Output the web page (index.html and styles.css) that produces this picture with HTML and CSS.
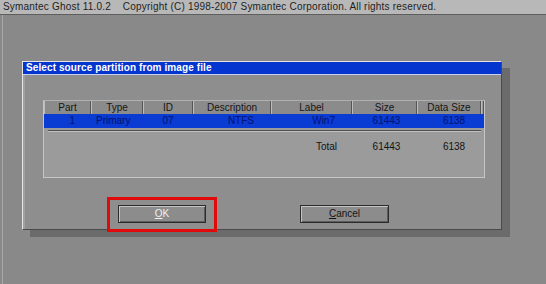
FILE: index.html
```html
<!DOCTYPE html>
<html>
<head>
<meta charset="utf-8">
<link rel="stylesheet" href="styles.css">
</head>
<body>
<div class="topbar">Symantec Ghost 11.0.2&nbsp;&nbsp;&nbsp; Copyright (C) 1998-2007 Symantec Corporation. All rights reserved.</div>
<div class="desk">
  <div class="dialog">
    <div class="title">Select source partition from image file</div>
    <div class="body">
      <div class="table">
        <div class="row head">
          <div class="c">Part</div>
          <div class="c">Type</div>
          <div class="c">ID</div>
          <div class="c">Description</div>
          <div class="c">Label</div>
          <div class="c">Size</div>
          <div class="c">Data Size</div>
          <div class="c stub"></div>
        </div>
        <div class="row sel">
          <div class="c r p1">1</div>
          <div class="c l">Primary</div>
          <div class="c">07</div>
          <div class="c r p2">NTFS</div>
          <div class="c r p2">Win7</div>
          <div class="c">61443</div>
          <div class="c">6138</div>
          <div class="c stub"></div>
        </div>
        <div class="sep"></div>
        <div class="row total">
          <div class="c"></div>
          <div class="c"></div>
          <div class="c"></div>
          <div class="c"></div>
          <div class="c tr">Total</div>
          <div class="c">61443</div>
          <div class="c">6138</div>
          <div class="c stub"></div>
        </div>
      </div>
      <div class="buttons">
        <div class="btn ok"><span class="u">O</span>K<div class="mark"></div></div>
        <div class="btn cancel"><span class="u">C</span>ancel</div>
      </div>
    </div>
  </div>
</div>
</body>
</html>
```
FILE: styles.css
```css
html, body {
  margin: 0;
  padding: 0;
}
body {
  width: 546px;
  height: 284px;
  overflow: hidden;
  background: #898989;
  font-family: "Liberation Sans", Arial, sans-serif;
  font-size: 10px;
  color: #151515;
}
.topbar {
  height: 14px;
  line-height: 14px;
  background: #b8b8b8;
  border-bottom: 1px solid #5e5e5e;
  padding-left: 3px;
  color: #1e1e1e;
  font-size: 10px;
  white-space: nowrap;
  letter-spacing: 0.2px;
}
.desk {
  height: 269px;
  margin-left: 2px;
  border-left: 1px solid #a9a9a9;
  padding-top: 46px;
  padding-left: 19px;
  box-sizing: border-box;
}
.dialog {
  width: 480px;
  height: 169px;
  box-sizing: border-box;
  background: #8e8e8e;
  border-left: 1px solid #e4e4e4;
  border-top: 1px solid #e4e4e4;
  border-right: 1px solid #4a4a4a;
  border-bottom: 1px solid #4a4a4a;
  box-shadow: 8px 7px 0 #6b6b6b;
  display: flex;
  flex-direction: column;
}
.title {
  height: 12px;
  line-height: 12px;
  background: #0535cf;
  color: #ffffff;
  font-weight: bold;
  font-size: 10px;
  padding-left: 3px;
  border-bottom: 1px solid #c8d0f0;
  letter-spacing: 0.1px;
}
.body {
  flex: 1;
  border-left: 2px solid #a0a0a0;
  padding: 25px 0 0 18px;
}
.table {
  width: 442px;
  height: 78px;
  box-sizing: border-box;
  background: #9b9b9b;
  border: 1px solid #c6c6c6;
  border-top-color: #b0b0b0;
}
.row {
  display: grid;
  grid-template-columns: 47px 52px 50px 78px 81px 65px 64px 3px;
}
.head {
  height: 13px;
  line-height: 13px;
}
.head .c {
  background: #8b8b8b;
  border-right: 1px solid #555;
  border-left: 1px solid #bdbdbd;
  text-align: center;
  color: #161616;
}
.head .stub {
  background: #9b9b9b;
}
.sel {
  height: 14px;
  line-height: 14px;
  background: #0a3bd3;
  color: #001272;
}
.c {
  text-align: center;
  white-space: nowrap;
  overflow: hidden;
}
.r { text-align: right; }
.l { text-align: left; padding-left: 5px; }
.p1 { padding-right: 16px; }
.p2 { padding-right: 17px; }
.sel .c:nth-child(6) { padding-left: 4px; }
.sel .c:nth-child(7) { padding-left: 10px; }
.sep {
  height: 1px;
  margin: 2px 3px 0 4px;
  background: #505050;
  border-bottom: 1px solid #c0c0c0;
}
.total {
  margin-top: 8px;
  height: 14px;
  line-height: 14px;
  color: #141414;
}
.total .tr { text-align: right; padding-right: 15px; }
.total .c:nth-child(6) { padding-left: 4px; }
.total .c:nth-child(7) { padding-left: 10px; }
.buttons {
  display: flex;
  margin-top: 27px;
  padding-left: 75px;
  gap: 94px;
}
.btn {
  position: relative;
  width: 88px;
  height: 18px;
  box-sizing: border-box;
  border: 1px solid #2c2c2c;
  background: #8c8c8c;
  box-shadow: inset 1px 1px 0 #c4c4c4, inset -1px -1px 0 #5c5c5c;
  text-align: center;
  line-height: 16px;
}
.ok { color: #f0f0f0; }
.cancel { width: 89px; color: #151515; }
.u { text-decoration: underline; }
.mark {
  position: absolute;
  left: -12px;
  top: -9px;
  width: 110px;
  height: 35px;
  box-sizing: border-box;
  border: 3px solid #e00a0a;
}
```
